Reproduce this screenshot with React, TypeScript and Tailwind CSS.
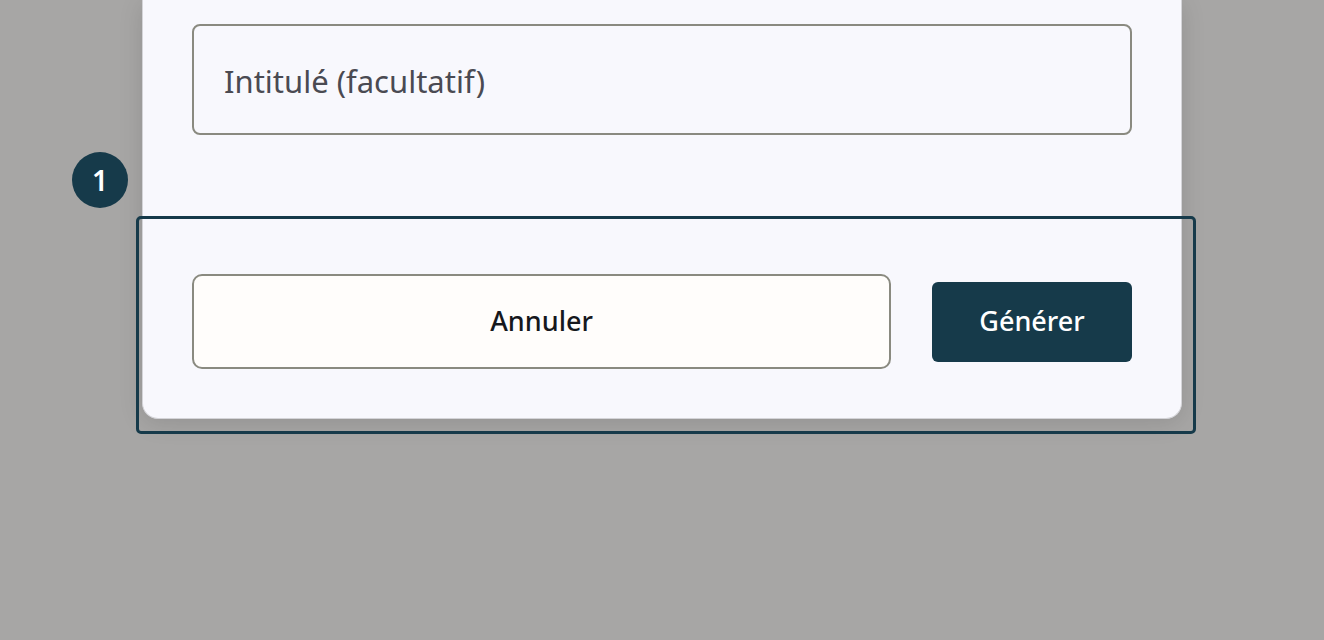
import React from "react";

export default function App() {
  return (
    <div
      className="relative w-[1324px] h-[640px] overflow-hidden bg-[#a7a6a5]"
      style={{ fontFamily: '"Noto Sans", "Open Sans", sans-serif' }}
    >
      <div className="ml-[142px] w-[1040px] rounded-b-[16px] border border-t-0 border-[#d4d4d8] bg-[#f8f8fd] shadow-[0_4px_24px_rgba(0,0,0,0.12)]">
        <div className="px-[49px] pt-[24px] pb-[84px]">
          <div className="flex h-[111px] items-center rounded-[8px] border-2 border-[#8a8a80] px-[30px] pt-[3px]">
            <span className="text-[31px] text-[#4a4a52]">Intitulé (facultatif)</span>
          </div>
        </div>
        <div className="flex items-center gap-[41px] px-[49px] pt-[55px] pb-[49px]">
          <button className="flex h-[95px] w-[699px] items-center justify-center rounded-[10px] border-2 border-[#8a8a80] bg-[#fffdfb] text-[27px] font-medium text-[#16181d]">
            Annuler
          </button>
          <button className="flex h-[80px] w-[200px] items-center justify-center rounded-[6px] bg-[#163a4a] text-[27px] font-medium text-white">
            Générer
          </button>
        </div>
      </div>

      <div className="pointer-events-none absolute left-[136px] top-[216px] h-[218px] w-[1060px] rounded-[5px] border-[3px] border-[#163a4a]" />

      <div className="absolute left-[72px] top-[152px] flex h-[56px] w-[56px] items-center justify-center rounded-full bg-[#163a4a] text-[28px] font-semibold text-white">
        1
      </div>
    </div>
  );
}
